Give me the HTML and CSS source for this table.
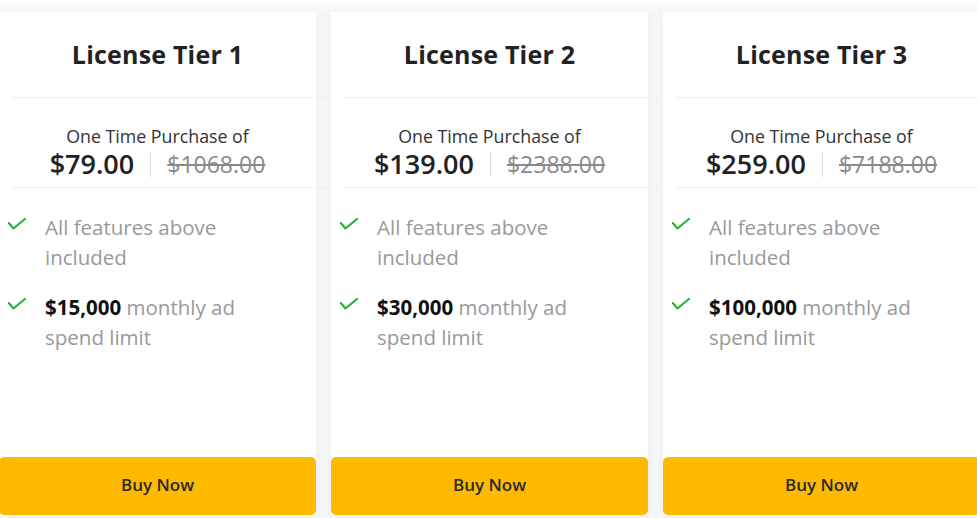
FILE: index.html
```html
<!DOCTYPE html>
<html>
<head>
<meta charset="utf-8">
<link rel="stylesheet" href="styles.css">
</head>
<body>
<div class="tiers">
  <div class="card">
    <div class="head"><h2 class="title">License Tier 1</h2></div>
    <div class="rule"></div>
    <div class="pricing">
      <div class="label">One Time Purchase of</div>
      <div class="price"><span class="now">$79.00</span><span class="sep"></span><span class="was">$1068.00</span></div>
    </div>
    <div class="rule"></div>
    <ul class="features">
      <li><svg class="check" viewBox="0 0 18 12" width="18" height="12"><polyline points="0.8,5 5.5,10.5 17.2,0.8"/></svg><span class="ftext">All features above included</span></li>
      <li><svg class="check" viewBox="0 0 18 12" width="18" height="12"><polyline points="0.8,5 5.5,10.5 17.2,0.8"/></svg><span class="ftext"><b>$15,000</b> monthly ad spend limit</span></li>
    </ul>
    <button class="buy">Buy Now</button>
  </div>
  <div class="card">
    <div class="head"><h2 class="title">License Tier 2</h2></div>
    <div class="rule"></div>
    <div class="pricing">
      <div class="label">One Time Purchase of</div>
      <div class="price"><span class="now">$139.00</span><span class="sep"></span><span class="was">$2388.00</span></div>
    </div>
    <div class="rule"></div>
    <ul class="features">
      <li><svg class="check" viewBox="0 0 18 12" width="18" height="12"><polyline points="0.8,5 5.5,10.5 17.2,0.8"/></svg><span class="ftext">All features above included</span></li>
      <li><svg class="check" viewBox="0 0 18 12" width="18" height="12"><polyline points="0.8,5 5.5,10.5 17.2,0.8"/></svg><span class="ftext"><b>$30,000</b> monthly ad spend limit</span></li>
    </ul>
    <button class="buy">Buy Now</button>
  </div>
  <div class="card">
    <div class="head"><h2 class="title">License Tier 3</h2></div>
    <div class="rule"></div>
    <div class="pricing">
      <div class="label">One Time Purchase of</div>
      <div class="price"><span class="now">$259.00</span><span class="sep"></span><span class="was">$7188.00</span></div>
    </div>
    <div class="rule"></div>
    <ul class="features">
      <li><svg class="check" viewBox="0 0 18 12" width="18" height="12"><polyline points="0.8,5 5.5,10.5 17.2,0.8"/></svg><span class="ftext">All features above included</span></li>
      <li><svg class="check" viewBox="0 0 18 12" width="18" height="12"><polyline points="0.8,5 5.5,10.5 17.2,0.8"/></svg><span class="ftext"><b>$100,000</b> monthly ad spend limit</span></li>
    </ul>
    <button class="buy">Buy Now</button>
  </div>
</div>
</body>
</html>
```
FILE: styles.css
```css
html, body {
  margin: 0;
  padding: 0;
  height: 518px;
  overflow: hidden;
}
body {
  background: linear-gradient(#fdfdfd 0, #f5f6f8 14px);
  font-family: "Open Sans", "Liberation Sans", sans-serif;
  color: #222;
}
.tiers {
  display: flex;
  gap: 15px;
  padding-top: 12px;
  margin-left: -1px;
}
.card {
  flex: 0 0 317px;
  width: 317px;
  height: 503px;
  background: #fff;
  display: flex;
  flex-direction: column;
  box-shadow: 0 0 8px rgba(0, 0, 0, 0.035);
}
.head {
  height: 85px;
  display: flex;
  align-items: center;
  justify-content: center;
}
.title {
  margin: 0;
  font-size: 25px;
  font-weight: 700;
  color: #222;
  letter-spacing: 0.2px;
  padding-bottom: 2px;
}
.rule {
  height: 1px;
  background: #efefef;
  width: 317px;
  margin-left: 13px;
  flex: none;
  position: relative;
  z-index: 1;
}
.pricing {
  height: 89px;
  padding-top: 26px;
  box-sizing: border-box;
  text-align: center;
}
.label {
  font-size: 17.8px;
  line-height: 24px;
  color: #333;
}
.price {
  display: flex;
  justify-content: center;
  align-items: center;
  height: 32px;
}
.now {
  font-size: 27px;
  font-weight: 600;
  color: #222;
  line-height: 32px;
}
.sep {
  width: 1px;
  height: 25px;
  background: #dcdcdc;
  margin: 0 16px;
}
.was {
  font-size: 23px;
  line-height: 32px;
  color: #8a8a8a;
  text-decoration: line-through;
  text-decoration-thickness: 2px;
}
.features {
  list-style: none;
  margin: 0;
  padding: 24px 30px 0 9px;
}
.features li {
  display: flex;
  gap: 19px;
  margin-bottom: 20px;
}
.check {
  flex: none;
  margin-top: 6px;
  fill: none;
  stroke: #1fb03a;
  stroke-width: 2;
  stroke-linecap: round;
  stroke-linejoin: round;
}
.ftext {
  display: block;
  font-size: 20.5px;
  line-height: 30px;
  color: #999;
  font-weight: 500;
  width: 225px;
}
.ftext b {
  color: #111;
  font-weight: 700;
}
.buy {
  margin-top: auto;
  height: 58px;
  border: none;
  border-radius: 5px;
  background: #fdba00;
  font-family: "Open Sans", "Liberation Sans", sans-serif;
  font-size: 17px;
  font-weight: 600;
  color: #2a2a2a;
  padding: 0 0 3px;
  width: 100%;
}
```
